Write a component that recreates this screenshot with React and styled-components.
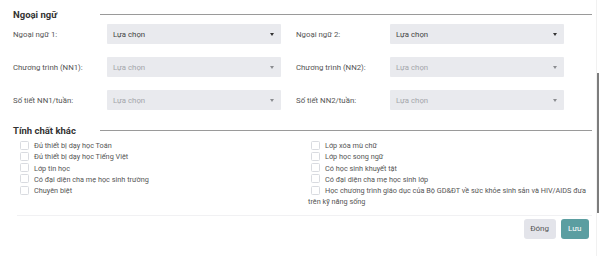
import React from "react"
import styled, { createGlobalStyle } from "styled-components"

const GlobalStyle = createGlobalStyle`
  html, body {
    margin: 0;
    padding: 0;
    background: #fff;
  }
  body {
    font-family: Roboto, "Noto Sans", "Liberation Sans", sans-serif;
    color: #555;
  }
`

const Frame = styled.div`
  width: 605px;
  height: 256px;
  display: flex;
  overflow: hidden;
`

const Content = styled.div`
  width: 596px;
  padding: 7px 4px 0 13px;
  box-sizing: border-box;
`

const Track = styled.div`
  width: 2px;
  border-left: 1px solid #f1f1f1;
  display: flex;
  flex-direction: column;
`

const Thumb = styled.div`
  width: 2px;
  height: 140px;
  margin-top: 73px;
  background: #7d7d7d;
`

const SectionHead = styled.div`
  display: flex;
  align-items: center;
  height: 14px;
  margin-top: ${(p) => p.$mt || 0}px;
  margin-bottom: ${(p) => p.$mb || 0}px;
`

const SectionTitle = styled.div`
  width: 87px;
  font-size: 9.5px;
  font-weight: 700;
  color: #333;
`

const Rule = styled.div`
  flex: 1;
  height: 1px;
  background: #9a9a9a;
`

const FormGrid = styled.div`
  display: grid;
  grid-template-columns: 94px 174px 109px 174px;
  row-gap: 13px;
`

const Label = styled.div`
  display: flex;
  align-items: center;
  font-size: 7.8px;
  color: #555;
  height: 20px;
  padding-left: ${(p) => (p.$right ? 15 : 0)}px;
`

const Select = styled.div`
  height: 20px;
  background: #e9eaee;
  border-radius: 1px;
  display: flex;
  align-items: center;
  justify-content: space-between;
  padding: 0 7px 0 6px;
  font-size: 7.8px;
  color: ${(p) => (p.$muted ? "#a4a6ab" : "#444")};
`

const Caret = styled.span`
  width: 0;
  height: 0;
  border-left: 2.5px solid transparent;
  border-right: 2.5px solid transparent;
  border-top: 3px solid ${(p) => (p.$muted ? "#8a8c90" : "#333")};
`

const Checks = styled.div`
  display: grid;
  grid-template-columns: 291px 288px;
  margin-left: 4px;
  margin-top: 3px;
  padding-bottom: 7px;
  border-bottom: 1px solid #f1f1f3;
`

const CheckCol = styled.div`
  font-size: 7.3px;
  line-height: 11.3px;
  color: #555;
`

const CheckItem = styled.div`
  white-space: nowrap;
`

const Box = styled.span`
  display: inline-block;
  width: 7px;
  height: 7px;
  border: 1px solid #d9dbe0;
  border-radius: 1.5px;
  margin: 0 5px 0 3px;
  vertical-align: -1.5px;
  background: #fff;
`

const Footer = styled.div`
  display: flex;
  justify-content: flex-end;
  gap: 5px;
  padding: 3px 3px 0 0;
`

const Button = styled.div`
  height: 20px;
  padding: 0 ${(p) => (p.$primary ? 7.5 : 6.5)}px;
  display: flex;
  align-items: center;
  border-radius: 3px;
  font-size: 8px;
  background: ${(p) => (p.$primary ? "#5b9ea1" : "#e3e4ea")};
  color: ${(p) => (p.$primary ? "#fff" : "#555")};
`

const fields = [
  ["Ngoại ngữ 1:", false, "Ngoại ngữ 2:", false],
  ["Chương trình (NN1):", true, "Chương trình (NN2):", true],
  ["Số tiết NN1/tuần:", true, "Số tiết NN2/tuần:", true],
]

const left = [
  "Đủ thiết bị dạy học Toán",
  "Đủ thiết bị dạy học Tiếng Việt",
  "Lớp tin học",
  "Có đại diện cha mẹ học sinh trường",
  "Chuyên biệt",
]

const right = [
  ["Lớp xóa mù chữ"],
  ["Lớp học song ngữ"],
  ["Có học sinh khuyết tật"],
  ["Có đại diện cha mẹ học sinh lớp"],
  [
    "Học chương trình giáo dục của Bộ GD&ĐT về sức khỏe sinh sản và HIV/AIDS đưa",
    "trên kỹ năng sống",
  ],
]

export default function App() {
  return (
    <Frame>
      <GlobalStyle />
      <Content>
        <SectionHead $mb={3}>
          <SectionTitle>Ngoại ngữ</SectionTitle>
          <Rule />
        </SectionHead>
        <FormGrid>
          {fields.map(([l1, m1, l2, m2]) => (
            <React.Fragment key={l1}>
              <Label>{l1}</Label>
              <Select $muted={m1}>
                Lựa chọn
                <Caret $muted={m1} />
              </Select>
              <Label $right>{l2}</Label>
              <Select $muted={m2}>
                Lựa chọn
                <Caret $muted={m2} />
              </Select>
            </React.Fragment>
          ))}
        </FormGrid>
        <SectionHead $mt={13}>
          <SectionTitle>Tính chất khác</SectionTitle>
          <Rule />
        </SectionHead>
        <Checks>
          <CheckCol>
            {left.map((t) => (
              <CheckItem key={t}>
                <Box />
                {t}
              </CheckItem>
            ))}
          </CheckCol>
          <CheckCol>
            {right.map(([t, rest]) => (
              <CheckItem key={t}>
                <Box />
                {t}
                {rest && (
                  <>
                    <br />
                    {rest}
                  </>
                )}
              </CheckItem>
            ))}
          </CheckCol>
        </Checks>
        <Footer>
          <Button>Đóng</Button>
          <Button $primary>Lưu</Button>
        </Footer>
      </Content>
      <Track>
        <Thumb />
      </Track>
    </Frame>
  )
}
